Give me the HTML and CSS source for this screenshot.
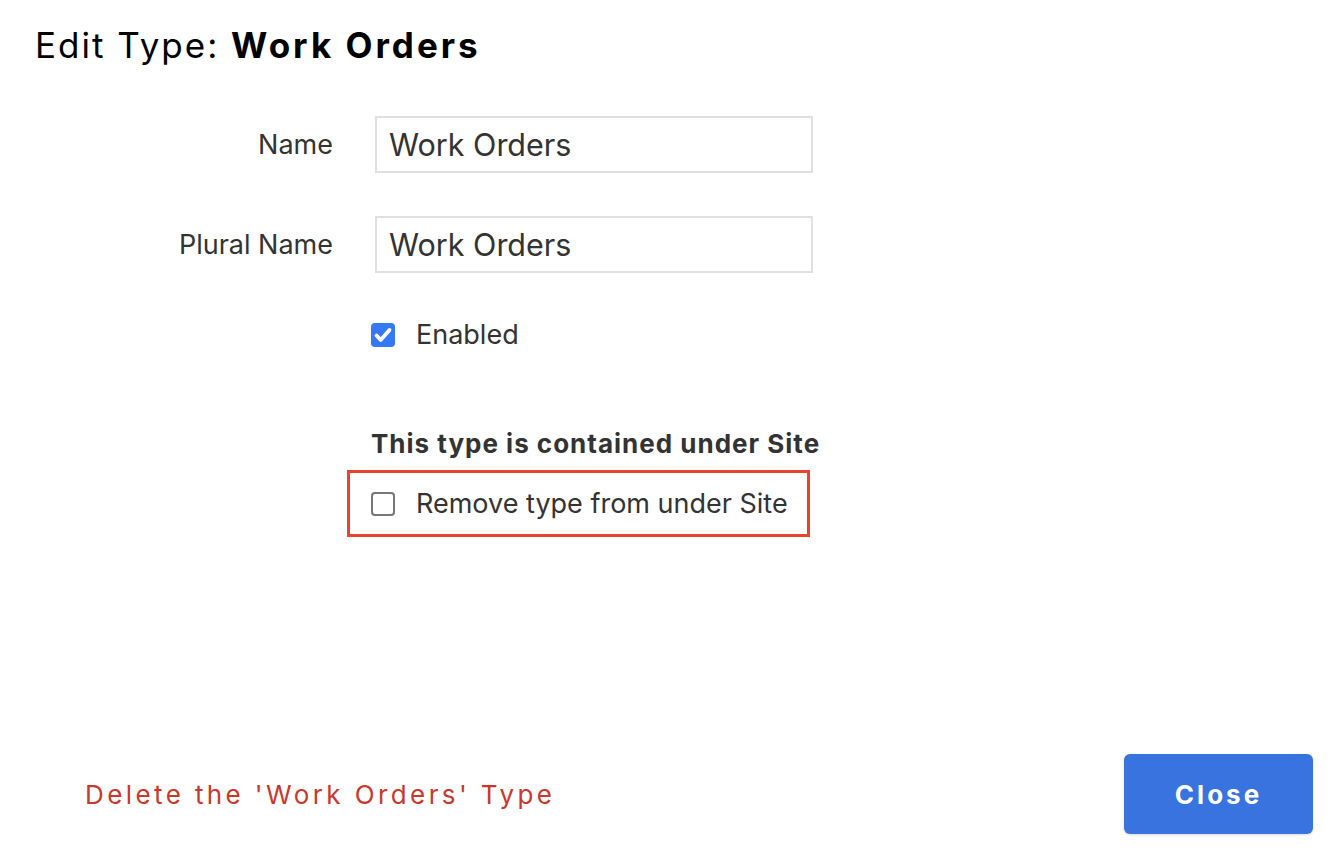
FILE: index.html
```html
<!DOCTYPE html>
<html>
<head>
<meta charset="utf-8">
<link rel="stylesheet" href="styles.css">
</head>
<body>
<div class="page">
  <h1 class="title">Edit Type: <strong>Work Orders</strong></h1>
  <div class="form">
    <label class="label" for="name">Name</label>
    <input class="field" id="name" type="text" value="Work Orders">
    <label class="label" for="plural">Plural Name</label>
    <input class="field" id="plural" type="text" value="Work Orders">
    <div></div>
    <label class="check-row enabled-row">
      <span class="box checked">
        <svg viewBox="0 0 24 24" width="24" height="24"><path d="M5.5 12.5l4.2 4.4 8.8-10" fill="none" stroke="#fff" stroke-width="3.8" stroke-linecap="round" stroke-linejoin="round"/></svg>
      </span>
      <span class="check-text">Enabled</span>
    </label>
  </div>
  <div class="contain">
    <div class="contain-title">This type is contained under Site</div>
    <div class="highlight">
      <label class="check-row">
        <span class="box"></span>
        <span class="check-text">Remove type from under Site</span>
      </label>
    </div>
  </div>
  <div class="footer">
    <a class="delete" href="#">Delete the 'Work Orders' Type</a>
    <button class="close" type="button">Close</button>
  </div>
</div>
</body>
</html>
```
FILE: styles.css
```css
html, body {
  margin: 0;
  padding: 0;
  background: #fff;
}
body {
  font-family: Inter, "Liberation Sans", sans-serif;
  color: #333;
}
.page {
  height: 860px;
  box-sizing: border-box;
  display: flex;
  flex-direction: column;
  padding: 22px 21px 26px 35px;
}
.title {
  margin: 0;
  font-size: 35px;
  font-weight: 400;
  color: #000;
  line-height: 46px;
  letter-spacing: 2px;
}
.title strong {
  font-weight: 700;
  letter-spacing: 3px;
}
.form {
  display: grid;
  grid-template-columns: 298px 438px;
  column-gap: 42px;
  row-gap: 43px;
  align-items: center;
  margin-top: 48px;
}
.label {
  text-align: right;
  font-size: 27px;
  line-height: 32px;
  color: #333;
}
.field {
  box-sizing: border-box;
  height: 57px;
  width: 438px;
  border: 2px solid #e0e0e0;
  padding: 0 12px;
  font-family: inherit;
  font-size: 30.5px;
  color: #333;
  outline: none;
}
.check-row {
  display: flex;
  align-items: center;
  gap: 21px;
  font-size: 27px;
  line-height: 29px;
  color: #333;
}
.enabled-row {
  margin-left: -4px;
  margin-top: 4px;
}
.box {
  box-sizing: border-box;
  width: 24px;
  height: 24px;
  border-radius: 4px;
  border: 2px solid #777;
  background: #fff;
  display: flex;
  align-items: center;
  justify-content: center;
  flex: none;
}
.box.checked {
  background: #3478f6;
  border: none;
}
.box svg {
  display: block;
}
.contain {
  margin-left: 312px;
  margin-top: 80px;
}
.contain-title {
  font-size: 26px;
  font-weight: 700;
  letter-spacing: 1px;
  color: #333;
  padding-left: 24px;
  line-height: 30px;
}
.highlight {
  margin-top: 11px;
  width: 463px;
  height: 67px;
  box-sizing: border-box;
  border: 3px solid #e8432d;
  display: flex;
  align-items: center;
  padding-left: 21px;
}
.footer {
  margin-top: auto;
  display: flex;
  align-items: center;
  justify-content: space-between;
  padding-left: 50px;
}
.delete {
  color: #c9382c;
  text-decoration: none;
  font-size: 26px;
  letter-spacing: 3.4px;
}
.close {
  width: 189px;
  height: 80px;
  border: none;
  border-radius: 6px;
  background: #3873e0;
  color: #fff;
  font-family: inherit;
  font-size: 26px;
  font-weight: 700;
  letter-spacing: 3px;
  box-shadow: 0 1px 3px rgba(0,0,0,0.15);
}
```
